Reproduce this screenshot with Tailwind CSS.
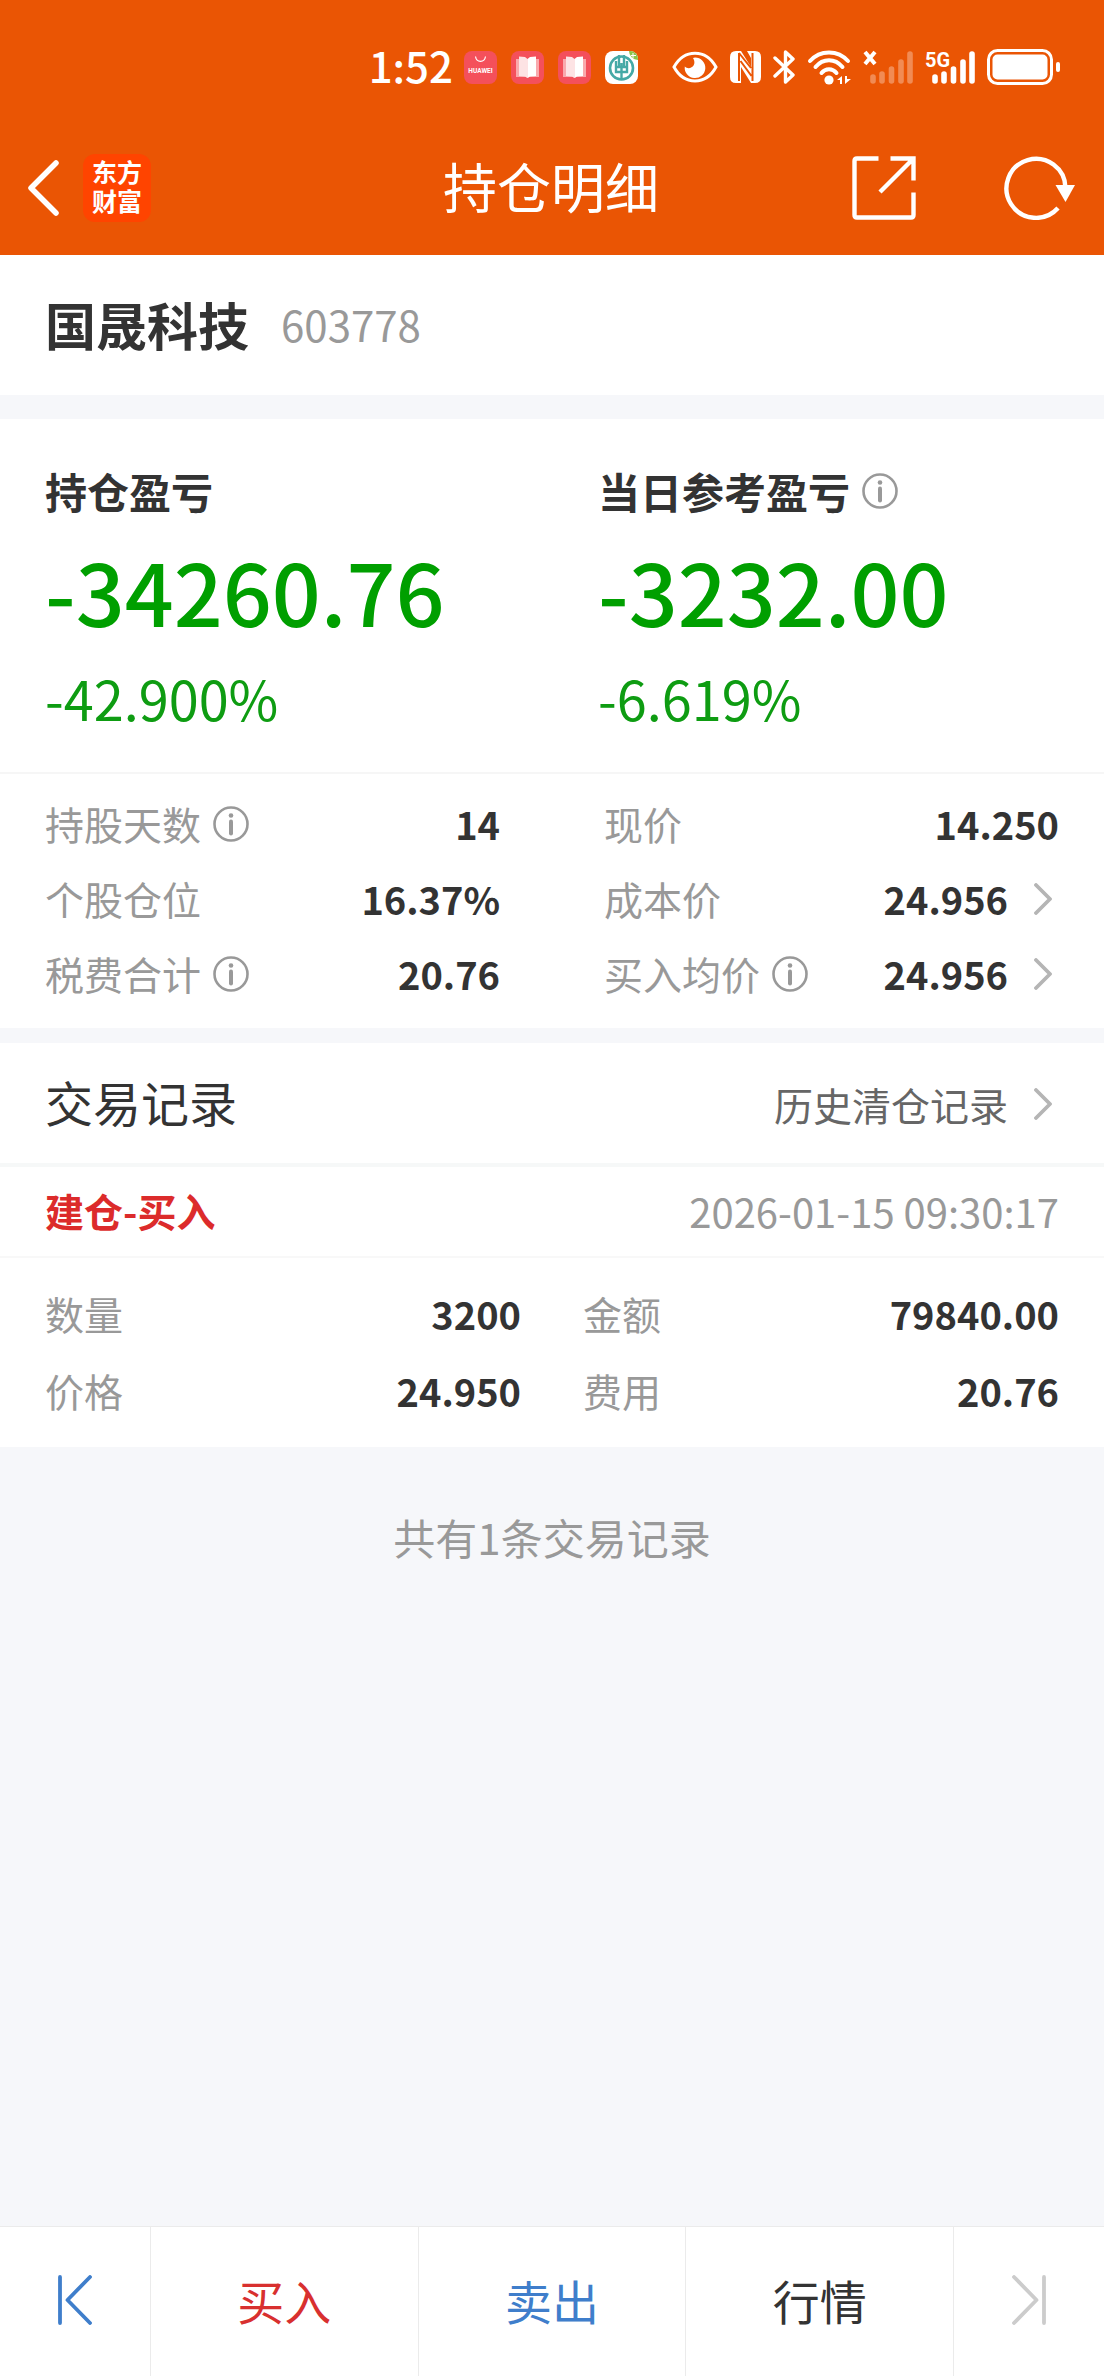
<!DOCTYPE html>
<html lang="zh-CN">
<head>
<meta charset="utf-8">
<meta name="viewport" content="width=device-width, initial-scale=1">
<title>持仓明细</title>
<script src="https://cdn.jsdelivr.net/npm/@tailwindcss/browser@4"></script>
</head>
<body class="flex min-h-screen flex-col bg-[#f6f7fa] font-['Noto_Sans_CJK_SC',sans-serif] text-[#333]">
<svg class="hidden" aria-hidden="true">
  <symbol id="info" viewBox="0 0 36 36"><circle cx="18" cy="18" r="16.5" fill="none" stroke="#999" stroke-width="2.6"/><circle cx="18" cy="9.5" r="2.3" fill="#999"/><path d="M18 15.5v12" stroke="#999" stroke-width="4" stroke-linecap="round"/></symbol>
  <symbol id="chevron" viewBox="0 0 18 32"><path d="M2 2l14 14L2 30" fill="none" stroke="#b5b5b5" stroke-width="3.8" stroke-linecap="round" stroke-linejoin="round"/></symbol>
  <symbol id="book" viewBox="0 0 33 33"><rect width="33" height="33" rx="8" fill="#f4505b"/><path d="M5 8h3v17H5zM25 8h3v17h-3z" fill="#fab0b4"/><path d="M5 8h23v18H18l-1.500 1L15 26H5z" fill="#f9a9ad"/><path d="M8 5.500l6 .5 2.500 2V27L14 25.500 8 25z" fill="#fde3e4"/><path d="M25 5.500l-6 .5-2.500 2V27l2.500-1.500 6-.5z" fill="#fff"/></symbol>
</svg>

<header class="bg-[#ea5504] text-white">
  <div class="flex h-30 items-center justify-end pt-[14px] pr-11">
    <span class="mr-[11px] pb-1 text-[42px] leading-none font-medium">1:52</span>
    <div class="flex gap-[14px]">
      <svg class="size-[33px]" viewBox="0 0 33 33"><rect width="33" height="33" rx="8" fill="#f4505b"/><path d="M11.500 5.500c1 6.500 9 6.500 10 0" fill="none" stroke="#fff" stroke-width="1.200"/><text x="16.500" y="21.500" text-anchor="middle" font-family="Roboto,sans-serif" font-size="6.500" font-weight="700" fill="#fff">HUAWEI</text></svg>
      <svg class="size-[33px]"><use href="#book"/></svg>
      <svg class="size-[33px]"><use href="#book"/></svg>
      <svg class="size-[33px]" viewBox="0 0 33 33"><rect width="33" height="33" rx="8" fill="#fff"/><path d="M24 0h1a8 8 0 0 1 8 8v1a9 9 0 0 1-9-9z" fill="#8bc34a"/><path d="M28 2v5M26 4.500h5" stroke="#fff"/><circle cx="16.500" cy="17" r="11.500" fill="none" stroke="#45a9a6" stroke-width="2.600"/><path d="M14 4v11M19 4v11M16.500 12v17M11 10v11h11V10M11 16h11" fill="none" stroke="#45a9a6" stroke-width="2.400"/></svg>
    </div>
    <svg class="ml-[34px] h-8 w-[46px]" viewBox="0 0 46 32"><path d="M2 16C12-2.500 34-2.500 44 16 34 34.500 12 34.500 2 16z" fill="none" stroke="#fff" stroke-width="3"/><path d="M23 6.500A10.300 10.300 0 1 1 12.800 15.500c4.500 4.500 13-1 8.200-8.500z" fill="#fff"/></svg>
    <svg class="ml-3 h-8 w-[31px]" viewBox="0 0 31 32"><path d="M6 0h5l10 16V7l-4-7h8q6 0 6 6v20q0 6-6 6h-4L11 16v16H6q-6 0-6-6V6Q0 0 6 0z" fill="#fff"/><path d="M9 2v28M22.500 2v28M9 2l12 15M10.500 10l11 15" fill="none" stroke="#ea5504" stroke-width="2"/></svg>
    <svg class="ml-3 h-[34px] w-[22px]" viewBox="0 0 22 34"><path d="M2 8l18 17-7.500 7V2L20 9 2 26" fill="none" stroke="#fff" stroke-width="3.400" stroke-linecap="round" stroke-linejoin="round"/></svg>
    <svg class="ml-3 h-9 w-[45px]" viewBox="0 0 45 36"><g fill="none" stroke="#fff" stroke-width="4" stroke-linecap="round"><path d="M3 12C13 .5 31 .5 41 12M8.500 18C16 9 28 9 35.500 18M14.500 24c4-5 11-5 15 0"/></g><circle cx="22" cy="31" r="4.600" fill="#fff"/><path d="M35 27v8h-2v-4h-3zM38 35v-8h2v3h4z" fill="#fff"/></svg>
    <svg class="ml-[11px] h-9 w-[50px]" viewBox="0 0 50 36"><path d="M2 3l10 12M12 3L2 15" stroke="#fff" stroke-width="4"/><g stroke="#fff" stroke-opacity=".32" stroke-width="5.600" stroke-linecap="round"><path d="M10 28v4M19 25v7M28.500 20v12M38 13v19M47 5v27"/></g></svg>
    <svg class="ml-3 h-9 w-[50px]" viewBox="0 0 50 36"><text x="0" y="18" font-family="Roboto,sans-serif" font-size="20" font-weight="700" fill="#fff">5G</text><g stroke="#fff" stroke-width="5.600" stroke-linecap="round"><path d="M10 28v4M19 25v7M28.500 20v12M38 13v19M47 5v27"/></g></svg>
    <svg class="ml-3 h-9 w-[73px]" viewBox="0 0 73 36"><rect x="1.500" y="1.500" width="63" height="33" rx="9" fill="none" stroke="#fff" stroke-width="3"/><rect x="5.500" y="5.500" width="55" height="25" rx="5" fill="#fff"/><rect x="69" y="13" width="4" height="10" rx="2" fill="#fff"/></svg>
  </div>
  <nav class="grid h-[135px] grid-cols-[1fr_auto_1fr] items-center pr-[29px] pl-[27px]">
    <div class="flex items-center gap-6">
      <button type="button" aria-label="返回"><svg class="h-14 w-8" viewBox="0 0 32 56"><path d="M29 3L4 28l25 25" fill="none" stroke="#fff" stroke-width="5.500" stroke-linecap="round" stroke-linejoin="round"/></svg></button>
      <span class="flex size-17 items-center justify-center rounded-xl bg-[#ff4400] pb-1 text-[25px] leading-[29px] font-bold">东方<br>财富</span>
    </div>
    <h1 class="pb-1 text-[54px] leading-none">持仓明细</h1>
    <div class="flex items-center justify-end gap-[88px]">
      <button type="button" aria-label="分享"><svg class="size-16" viewBox="0 0 64 64"><path d="M26.500 2.500H5Q2.500 2.500 2.500 5v54q0 2.500 2.500 2.500h54q2.500 0 2.500-2.500V36.500M38.500 2.500h23v22M61 3L28 36" fill="none" stroke="#fff" stroke-width="4.400"/></svg></button>
      <button type="button" aria-label="刷新"><svg class="h-16 w-[71px]" viewBox="0 0 71 64"><path d="M54 52A29.500 29.500 0 1 1 61.500 32" fill="none" stroke="#fff" stroke-width="4.400"/><path d="M51.500 29H71L61.500 46z" fill="#fff"/></svg></button>
    </div>
  </nav>
</header>

<main class="flex-1">
  <section class="flex h-35 items-center gap-8 bg-white px-[45px] pb-[2px]">
    <h2 class="text-[51px] leading-none font-bold">国晟科技</h2>
    <span class="text-[42px] leading-none text-[#999]">603778</span>
  </section>

  <section class="mt-6 bg-white">
    <div class="grid h-[353px] grid-cols-2 content-start pt-[50px]">
      <div class="pl-[45px]">
        <h3 class="text-[42px] leading-[44px] font-bold">持仓盈亏</h3>
        <p class="mt-[27px] text-[86px] leading-[100px] font-medium text-[#009f00]">-34260.76</p>
        <p class="mt-[28px] text-[54px] leading-[60px] text-[#0e9c12]">-42.900%</p>
      </div>
      <div class="pl-[46px]">
        <h3 class="flex items-center gap-3 text-[42px] leading-[44px] font-bold">当日参考盈亏<button type="button" aria-label="当日参考盈亏说明"><svg class="size-9"><use href="#info"/></svg></button></h3>
        <p class="mt-[27px] text-[86px] leading-[100px] font-medium text-[#009f00]">-3232.00</p>
        <p class="mt-[28px] text-[54px] leading-[60px] text-[#0e9c12]">-6.619%</p>
      </div>
    </div>
    <div class="grid grid-cols-2 border-t-2 border-[#f6f6f6] pt-3 pb-[17px] text-[39px]">
      <dl class="pr-[52px] pl-[45px]">
        <div class="flex h-[75px] items-center justify-between"><dt class="flex items-center gap-3 text-[#999]">持股天数<button type="button" aria-label="持股天数说明"><svg class="size-9"><use href="#info"/></svg></button></dt><dd class="text-[38px] font-bold">14</dd></div>
        <div class="flex h-[75px] items-center justify-between"><dt class="text-[#999]">个股仓位</dt><dd class="text-[38px] font-bold">16.37%</dd></div>
        <div class="flex h-[75px] items-center justify-between"><dt class="flex items-center gap-3 text-[#999]">税费合计<button type="button" aria-label="税费合计说明"><svg class="size-9"><use href="#info"/></svg></button></dt><dd class="text-[38px] font-bold">20.76</dd></div>
      </dl>
      <dl class="pr-[45px] pl-[52px]">
        <div class="flex h-[75px] items-center justify-between"><dt class="text-[#999]">现价</dt><dd class="text-[38px] font-bold">14.250</dd></div>
        <div class="flex h-[75px] items-center justify-between"><dt class="text-[#999]">成本价</dt><dd><a href="#" class="flex items-center gap-[26px] pr-[7px] text-[38px] font-bold">24.956<svg class="h-8 w-[18px]"><use href="#chevron"/></svg></a></dd></div>
        <div class="flex h-[75px] items-center justify-between"><dt class="flex items-center gap-3 text-[#999]">买入均价<button type="button" aria-label="买入均价说明"><svg class="size-9"><use href="#info"/></svg></button></dt><dd><a href="#" class="flex items-center gap-[26px] pr-[7px] text-[38px] font-bold">24.956<svg class="h-8 w-[18px]"><use href="#chevron"/></svg></a></dd></div>
      </dl>
    </div>
  </section>

  <section class="mt-[15px] bg-white">
    <div class="flex h-[124px] items-center justify-between border-b-4 border-[#f6f8f8] px-[45px]">
      <h2 class="pb-1 text-[48px] leading-none">交易记录</h2>
      <a href="#" class="flex items-center gap-[26px] pt-[2px] pr-[7px] text-[39px] leading-none text-[#666]">历史清仓记录<svg class="h-8 w-[18px]"><use href="#chevron"/></svg></a>
    </div>
    <div class="flex h-[91px] items-center justify-between border-b-2 border-[#f8f8f8] px-[45px] pb-[2px]">
      <h3 class="text-[39px] leading-none font-bold text-[#dc2b2b]">建仓-买入</h3>
      <time class="text-[40px] leading-none text-[#999]">2026-01-15 09:30:17</time>
    </div>
    <dl class="grid grid-cols-2 gap-x-[62px] px-[45px] pt-[17px] pb-[18px] text-[39px]">
      <div class="flex h-[77px] items-center justify-between"><dt class="text-[#999]">数量</dt><dd class="text-[38px] font-bold">3200</dd></div>
      <div class="flex h-[77px] items-center justify-between"><dt class="text-[#999]">金额</dt><dd class="text-[38px] font-bold">79840.00</dd></div>
      <div class="flex h-[77px] items-center justify-between"><dt class="text-[#999]">价格</dt><dd class="text-[38px] font-bold">24.950</dd></div>
      <div class="flex h-[77px] items-center justify-between"><dt class="text-[#999]">费用</dt><dd class="text-[38px] font-bold">20.76</dd></div>
    </dl>
  </section>
  <p class="pt-[58px] text-center text-[42px] text-[#999]">共有1条交易记录</p>
</main>

<footer class="grid h-[150px] grid-cols-[151px_1fr_1fr_1fr_150px] divide-x divide-[#ebebeb] border-t border-[#ebebeb] bg-white text-[47px]">
  <button type="button" class="flex items-center justify-center pb-1" aria-label="上一只"><svg class="h-[50px] w-[34px]" viewBox="0 0 34 50"><path d="M2 2v46M32 2L9.500 25 32 48" fill="none" stroke="#3f7ecb" stroke-width="3.800" stroke-linecap="round" stroke-linejoin="round"/></svg></button>
  <button type="button" class="pb-[2px] text-[#d8302f]">买入</button>
  <button type="button" class="pb-[2px] text-[#3f7ecb]">卖出</button>
  <button type="button" class="pb-[2px]">行情</button>
  <button type="button" class="flex items-center justify-center pb-1" aria-label="下一只"><svg class="h-[50px] w-[34px]" viewBox="0 0 34 50"><path d="M32 2v46M2 2l22.500 23L2 48" fill="none" stroke="#ccc" stroke-width="3.800" stroke-linecap="round" stroke-linejoin="round"/></svg></button>
</footer>
</body>
</html>
